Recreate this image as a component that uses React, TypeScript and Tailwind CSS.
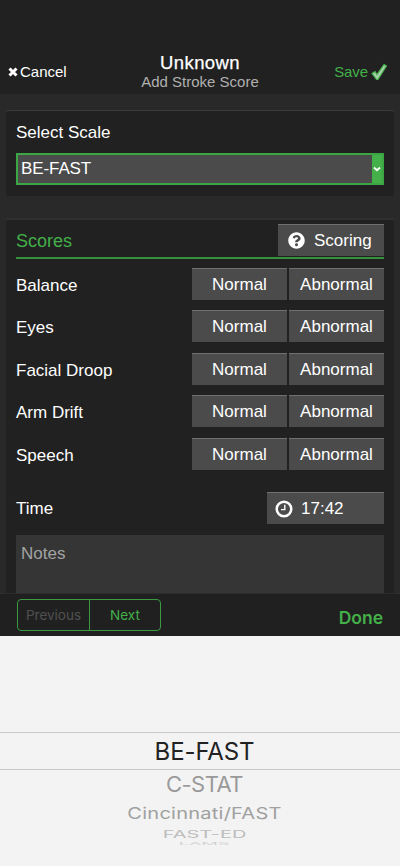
import { FaQuestionCircle } from "react-icons/fa";

const SCORES = [
  { label: "Balance", gap: "mb-[10px]" },
  { label: "Eyes", gap: "mb-[11px]" },
  { label: "Facial Droop", gap: "mb-[10px]" },
  { label: "Arm Drift", gap: "mb-[11px]" },
  { label: "Speech", gap: "mb-[22px]" },
];

// Picker rows flatten and fade as they roll away from the selected one.
const WHEEL = [
  { label: "BE-FAST", row: "h-[36px] pt-[2px]", text: "text-[24px] tracking-[-0.1px] text-[#222]" },
  { label: "C-STAT", row: "h-[29px]", text: "text-[22px] tracking-[-0.5px] scale-y-[0.95] text-[#999]" },
  { label: "Cincinnati/FAST", row: "h-[27px]", text: "text-[20px] tracking-[0.25px] scale-y-[0.8] text-[#a0a0a0]" },
  { label: "FAST-ED", row: "h-[15px]", text: "text-[20px] scale-y-[0.52] text-[#bcbcbc]" },
];

const BUTTON = "flex h-8 items-center border-t border-[#707070] bg-[#4b4b4b] text-[17px] text-white";

function ClockIcon() {
  return (
    <svg viewBox="0 0 18 18" className="h-[18px] w-[18px]" fill="none" stroke="currentColor">
      <circle cx="9" cy="9" r="7.3" strokeWidth="2.5" />
      <path d="M9.8 4.8V9.6H6" strokeWidth="1.4" />
    </svg>
  );
}

function ScoreRow({ label, gap }: { label: string; gap: string }) {
  return (
    <div className={`flex h-8 items-center justify-between ${gap}`}>
      <span className="pt-[3px] text-[17px] text-white">{label}</span>
      <div className="flex gap-[2px]">
        <button className={`${BUTTON} w-[95px] justify-center`}>Normal</button>
        <button className={`${BUTTON} w-[95px] justify-center`}>Abnormal</button>
      </div>
    </div>
  );
}

function Header() {
  return (
    <header className="grid h-[94px] grid-cols-[1fr_auto_1fr] bg-[#212121] pt-[52px]">
      <button className="flex h-[40px] items-center gap-[2px] pl-2 text-[15px] text-white">
        <svg viewBox="0 0 10 10" className="h-[10px] w-[10px]">
          <path d="M1.5 1.5 8.5 8.5M8.5 1.5 1.5 8.5" stroke="white" strokeWidth="3" />
        </svg>
        Cancel
      </button>
      <div className="text-center">
        <h1 className="text-[18.5px] leading-[21px] font-medium tracking-[0.4px] text-white [-webkit-text-stroke:0.25px_white]">Unknown</h1>
        <p className="text-[15px] leading-[18px] text-[#b0b0b0]">Add Stroke Score</p>
      </div>
      <button className="flex h-[40px] items-center justify-end gap-[3px] pr-[13px] text-[15px] tracking-[-0.1px] text-[#43b049]">
        Save
        <svg viewBox="0 0 16 18" className="h-[18px] w-4">
          <path d="M1 10.5 4 8.5 6 11.5 13 1.5 15.5 3 7 16.5H5.5Z" fill="#a5cfa7" stroke="#43b049" strokeWidth="1.2" />
        </svg>
      </button>
    </header>
  );
}

export default function App() {
  return (
    <div className="flex h-[866px] w-[400px] flex-col overflow-hidden bg-[#292929] font-['Liberation_Sans',Arial,sans-serif]">
      <Header />

      <main className="h-[499px] shrink-0 overflow-hidden px-[6px] pt-4">
        <section className="h-[86px] rounded-[3px] border-t border-[#3d3d3d] bg-[#212121] px-[10px] pt-[11px]">
          <label className="block h-[31px] text-[17px] leading-[21px] text-white">Select Scale</label>
          <div className="flex h-8 items-stretch border-2 border-[#3da644] bg-[#4b4b4b]">
            <span className="flex-1 pl-[3px] text-[17px] leading-[28px] tracking-[-0.1px] text-white">BE-FAST</span>
            <span className="flex w-[10px] items-center justify-center bg-[#43b049]">
              <svg viewBox="0 0 8 6" className="h-[6px] w-2">
                <path d="M1 1.5 4 4.2 7 1.5" fill="none" stroke="white" strokeWidth="1.8" />
              </svg>
            </span>
          </div>
        </section>

        <section className="mt-[22px] h-[390px] rounded-t-[3px] border-t-2 border-[#303030] bg-[#212121] px-[10px] pt-1">
          <div className="flex h-[33px] justify-between">
            <h2 className="text-[18px] leading-[34px] text-[#43b049]">Scores</h2>
            <button className={`${BUTTON} w-[106px] gap-[9px] pl-[10px]`}>
              <FaQuestionCircle className="h-[17px] w-[17px]" />
              Scoring
            </button>
          </div>
          <div className="mb-[9px] h-[2px] bg-[#36913c]" />

          {SCORES.map((score) => (
            <ScoreRow key={score.label} label={score.label} gap={score.gap} />
          ))}

          <div className="flex h-8 items-center justify-between">
            <span className="pt-[2px] text-[17px] text-white">Time</span>
            <button className={`${BUTTON} w-[117px] gap-2 pl-2`}>
              <ClockIcon />
              17:42
            </button>
          </div>

          <div className="mt-[11px] h-[70px] bg-[#353535] px-[5px] pt-2 text-[17px] leading-[21px] text-[#a3a3a3]">Notes</div>
        </section>
      </main>

      <div className="flex h-[43px] shrink-0 items-center justify-between border-t border-[#2c2c2c] bg-[#202020] px-[17px] font-[Inter,sans-serif]">
        <div className="mt-[-1px] flex h-8 w-[144px] rounded-[4px] border border-[#3a9941] text-[13.5px]">
          <button className="w-[72px] border-r border-[#3a9941] pt-[2px] text-[#505050]">Previous</button>
          <button className="flex-1 pt-[2px] text-[#43b049]">Next</button>
        </div>
        <button className="mt-[7px] text-[17.5px] font-semibold text-[#43b049]">Done</button>
      </div>

      <div className="flex-1 bg-[#f3f3f3] pt-24 font-[Inter,sans-serif]">
        {WHEEL.map((item, i) => (
          <div key={item.label} className={i === 0 ? "border-y border-[#c9c9c9]" : ""}>
            <div className={`flex items-center justify-center pl-[9px] ${item.row}`}>
              <span className={`whitespace-nowrap ${item.text}`}>{item.label}</span>
            </div>
          </div>
        ))}
        <div className="flex h-[6px] items-center justify-center overflow-hidden pl-[8px]">
          <span className="scale-y-[0.22] text-[18px] leading-none text-[#d0d0d0]">LAMS</span>
        </div>
      </div>
    </div>
  );
}
